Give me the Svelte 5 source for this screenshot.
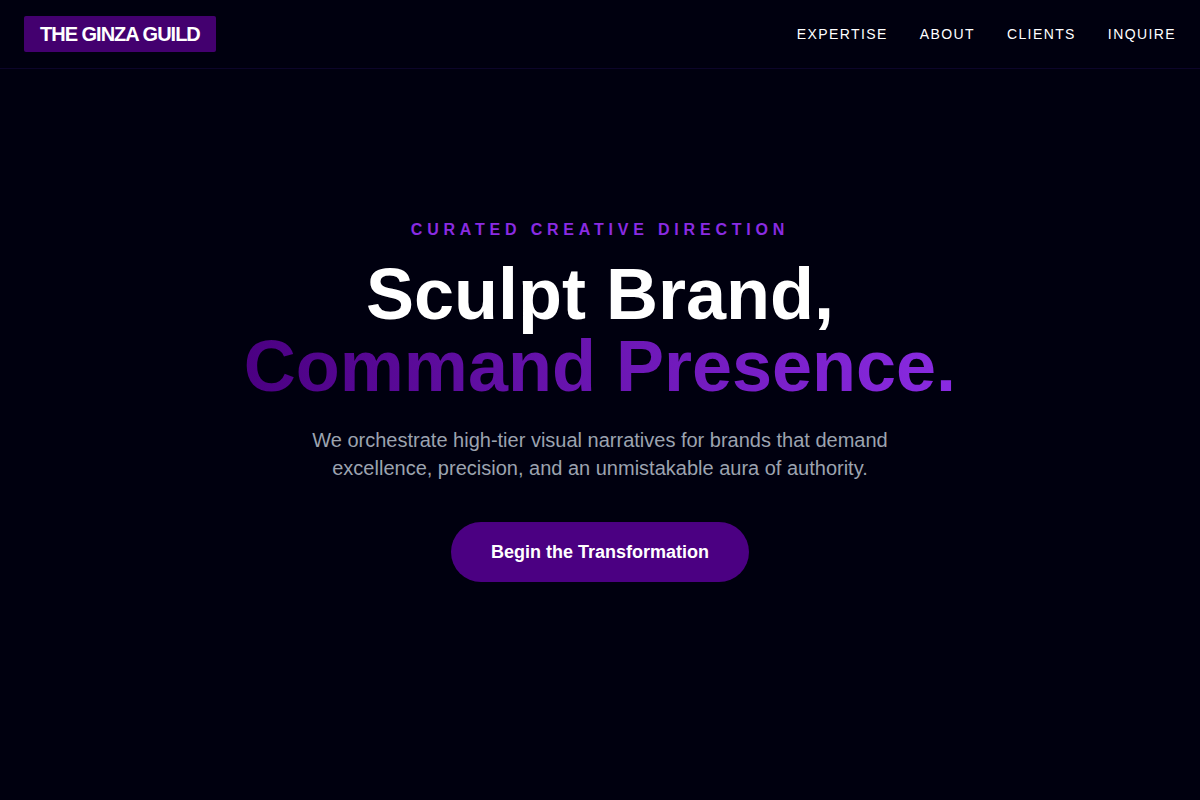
<script lang="ts">
  const links = [
    { label: 'Expertise', href: '#expertise' },
    { label: 'About', href: '#about' },
    { label: 'Clients', href: '#clients' },
    { label: 'Inquire', href: '#inquire' }
  ];
</script>

<div class="page">
  <header class="site-header">
    <a class="brand" href="#top">THE GINZA GUILD</a>
    <nav class="site-nav" aria-label="Main">
      {#each links as link}
        <a href={link.href}>{link.label}</a>
      {/each}
    </nav>
  </header>

  <main class="hero" id="top">
    <p class="eyebrow">Curated Creative Direction</p>
    <h1>
      Sculpt Brand,<br />
      <span class="accent">Command Presence.</span>
    </h1>
    <p class="lead">
      We orchestrate high-tier visual narratives for brands that demand excellence, precision, and an
      unmistakable aura of authority.
    </p>
    <button type="button" class="cta">Begin the Transformation</button>
  </main>
</div>

<style>
  :global(body) {
    margin: 0;
    background: #00000f;
  }

  .page {
    display: flex;
    flex-direction: column;
    min-height: 100vh;
    color: #ffffff;
    font-family: 'Liberation Sans', Arial, sans-serif;
  }

  .site-header {
    display: flex;
    align-items: center;
    justify-content: space-between;
    padding: 16px 24px;
    border-bottom: 1px solid #0c052a;
  }

  .brand {
    padding: 4px 16px;
    border-radius: 2px;
    background: #43006f;
    color: #ffffff;
    font-size: 20px;
    font-weight: 700;
    line-height: 28px;
    letter-spacing: -1px;
    text-decoration: none;
  }

  .site-nav {
    display: flex;
    gap: 32px;
  }

  .site-nav a {
    color: #ffffff;
    font-size: 14px;
    line-height: 20px;
    letter-spacing: 0.1em;
    text-decoration: none;
    text-transform: uppercase;
  }

  /* bottom padding equals the header height, so the content centres on the window */
  .hero {
    display: flex;
    flex: 1;
    flex-direction: column;
    align-items: center;
    justify-content: center;
    padding: 0 24px 69px;
    text-align: center;
  }

  .eyebrow {
    margin: 0 0 16px;
    color: #8a2be2;
    font-size: 16px;
    font-weight: 700;
    line-height: 24px;
    letter-spacing: 0.3em;
    text-transform: uppercase;
  }

  h1 {
    margin: 0 0 24px;
    font-size: 72px;
    font-weight: 700;
    line-height: 72px;
  }

  .accent {
    background: linear-gradient(to right, #4b0082, #8a2be2);
    background-clip: text;
    color: transparent;
  }

  .lead {
    max-width: 672px;
    margin: 0 0 40px;
    color: #9ca3af;
    font-size: 20px;
    line-height: 28px;
  }

  .cta {
    padding: 16px 40px;
    border: 0;
    border-radius: 999px;
    background: #4b0082;
    color: #ffffff;
    font: inherit;
    font-size: 18px;
    font-weight: 700;
    line-height: 28px;
    cursor: pointer;
  }
</style>
